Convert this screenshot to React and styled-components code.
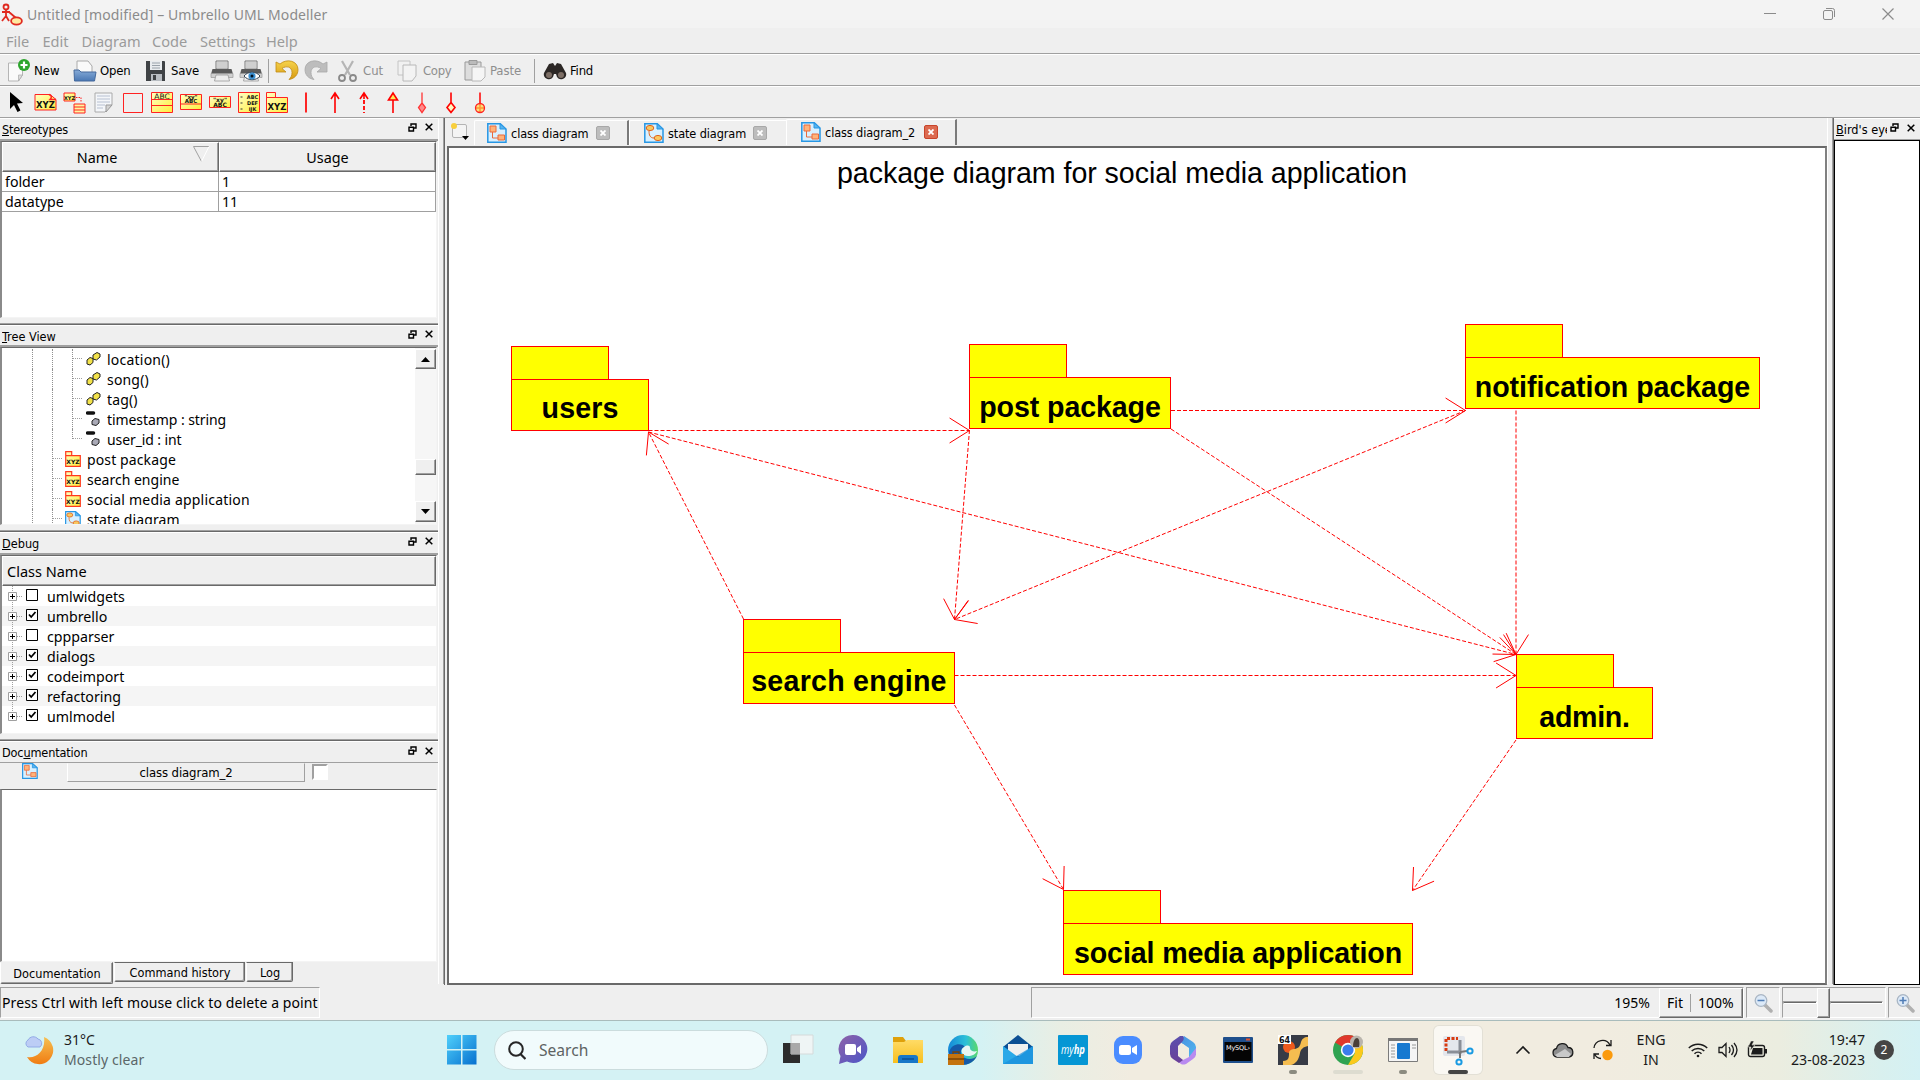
import React from "react";
import styled, { createGlobalStyle, css } from "styled-components";

const tahoma = `"DejaVu Sans Condensed", "DejaVu Sans", sans-serif`;
const segoe = `"Noto Sans", "Open Sans", sans-serif`;

const Global = createGlobalStyle`
  * { box-sizing: border-box; }
  html, body { margin: 0; padding: 0; background: #efefef; }
  body { font-family: ${segoe}; color: #000; overflow: hidden; }
  svg { display: block; flex: none; }
`;

const Screen = styled.div`
  width: 1920px;
  height: 1080px;
  display: flex;
  flex-direction: column;
  background: #efefef;
  overflow: hidden;
  white-space: nowrap;
`;

/* ---------- window chrome ---------- */

const TitleBar = styled.header`
  height: 28px;
  flex: none;
  display: flex;
  align-items: center;
  background: #f3f3f3;
  padding: 0 26px 0 1px;
  color: #8b8b8b;
`;
const WindowTitle = styled.span`
  flex: 1;
  margin-left: 4px;
  font-size: 14px;
  letter-spacing: 0.11px;
`;
const WindowButtons = styled.div`
  display: flex;
  gap: 47px;
`;

const MenuBar = styled.nav`
  height: 25px;
  flex: none;
  display: flex;
  align-items: center;
  padding-left: 6px;
  color: #9b9b9b;
`;
const MenuItem = styled.span`
  width: ${(p) => p.$w}px;
  font-size: 14.6px;
`;

const Toolbar = styled.div`
  height: 32px;
  flex: none;
  display: flex;
  align-items: center;
  border-top: 1px solid #a0a0a0;
  box-shadow: inset 0 1px 0 #fff;
  padding: 2px 0 0 ${(p) => p.$pad}px;
`;
const Action = styled.div`
  width: ${(p) => p.$w}px;
  height: 24px;
  display: flex;
  align-items: center;
  gap: 3px;
  font: 13px ${tahoma};
  letter-spacing: ${(p) => p.$ls || 0}px;
  color: ${(p) => (p.$off ? "#8e8e8e" : "#000")};
`;
const ToolSep = styled.div`
  width: 1px;
  height: 24px;
  background: #a0a0a0;
  margin-right: ${(p) => p.$after}px;
`;
const Tool = styled.div`
  width: 28.95px;
  height: 24px;
  flex: none;
`;

/* ---------- docks ---------- */

const Workspace = styled.main`
  height: 869px;
  flex: none;
  display: flex;
  border-top: 1px solid #a0a0a0;
`;
const LeftDock = styled.aside`
  width: 438px;
  flex: none;
  display: flex;
  flex-direction: column;
`;
const Dock = styled.section`
  height: ${(p) => p.$h}px;
  flex: none;
  display: flex;
  flex-direction: column;
  ${(p) =>
    p.$line &&
    css`
      border-bottom: 1px solid #696969;
      box-shadow: inset 0 -1px 0 #a0a0a0;
      padding-bottom: 6px;
    `}
`;
const DockTitle = styled.div`
  height: ${(p) => (p.$tall ? 23 : 22)}px;
  flex: none;
  display: flex;
  align-items: center;
  padding: 2px ${(p) => p.$right ?? 5}px ${(p) => (p.$tall ? 1 : 0)}px 2px;
  border-bottom: ${(p) => (p.$thin ? 1 : 2)}px solid #a0a0a0;
  box-shadow: inset 0 1px 0 #fff;
  font: 12.6px ${tahoma};
`;
const DockName = styled.span`
  flex: 1;
  min-width: 0;
  overflow: hidden;
  letter-spacing: ${(p) => p.$ls || 0}px;
`;
const DockIcons = styled.div`
  display: flex;
  flex: none;
  gap: 8px;
  align-items: center;
  margin: -4px 0 0 3px;
`;
const Frame = styled.div`
  flex: 1;
  min-height: 0;
  margin-right: 1px;
  background: #fff;
  border: 1px solid;
  border-color: #696969 #f4f4f4 #f4f4f4 #8a8a8a;
  border-left-width: 2px;
  overflow: hidden;
  display: flex;
`;

const Table = styled.div`
  width: 100%;
  display: grid;
  grid-template-columns: 217px 217px;
  grid-template-rows: 30px 20px 20px;
`;
const HeadCell = styled.div`
  display: flex;
  align-items: center;
  justify-content: center;
  padding-left: ${(p) => p.$pad || 0}px;
  background: #efefef;
  border: 1px solid;
  border-color: #fff #696969 #696969 #fff;
  box-shadow: inset -1px -1px 0 #a0a0a0;
  font-size: 14.4px;
`;
const SortMark = styled.svg`
  margin: -6px 0 0 76px;
`;
const Cell = styled.div`
  padding-left: 3px;
  border-right: 1px solid #a0a0a0;
  border-bottom: 1px solid #a0a0a0;
  font-size: 14.2px;
  line-height: 19px;
`;

const Tree = styled.div`
  flex: 1;
  padding-top: 1px;
  overflow: hidden;
`;
const TreeRow = styled.div`
  height: 20px;
  display: flex;
  align-items: center;
  padding-left: 30px;
  font-size: 14px;
  letter-spacing: ${(p) => p.$ls}px;
`;
const Guide = styled.i`
  width: 20px;
  height: 20px;
  flex: none;
  border-left: 1px dotted #909090;
`;
const Elbow = styled.i`
  width: 11px;
  height: ${(p) => (p.$last ? 10 : 20)}px;
  align-self: flex-start;
  flex: none;
  border-left: 1px dotted #909090;
  background: linear-gradient(90deg, #a0a0a0 50%, transparent 50%) 0 9px / 2px 1px repeat-x;
`;
const TreeIcon = styled.span`
  width: 22px;
  flex: none;
  padding-left: ${(p) => p.$pad}px;
  margin-right: 2px;
`;
const ScrollBar = styled.div`
  width: 21px;
  flex: none;
  display: flex;
  flex-direction: column;
  padding-top: 1px;
  background: #f6f6f6;
`;
const ScrollPart = styled.div`
  height: ${(p) => p.$h}px;
  flex: none;
  margin-top: ${(p) => p.$gap || 0}px;
  display: flex;
  align-items: center;
  justify-content: center;
  background: #efefef;
  border: 1px solid;
  border-color: #fff #696969 #696969 #fff;
  box-shadow: inset -1px -1px 0 #a0a0a0;
`;

const DebugList = styled.div`
  flex: 1;
`;
const DebugHead = styled.div`
  height: 30px;
  padding-left: 4px;
  background: #efefef;
  border: 1px solid;
  border-color: #fff #696969 #696969 #fff;
  box-shadow: inset -1px -1px 0 #a0a0a0;
  font-size: 14.5px;
  line-height: 29px;
`;
const DebugRow = styled.div`
  height: 20px;
  display: flex;
  align-items: center;
  background: ${(p) => (p.$alt ? "#f5f5f5" : "#fff")};
  font-size: 14.2px;
`;

const DocHead = styled.div`
  height: 26px;
  flex: none;
  display: flex;
  align-items: flex-start;
  padding-left: 22px;
`;
const DocButton = styled.div`
  width: 238px;
  height: 19px;
  margin: 0 7px 0 29px;
  border: 1px solid;
  border-color: #efefef #a0a0a0 #a0a0a0 #fff;
  text-align: center;
  font: 13px/17px ${tahoma};
  letter-spacing: -0.1px;
`;
const DocCheck = styled.div`
  width: 16px;
  height: 16px;
  margin-top: 1px;
  background: #fff;
  border: 2px solid;
  border-color: #a0a0a0 #fff #fff #a0a0a0;
`;
const BottomTabs = styled.div`
  height: 24px;
  flex: none;
  display: flex;
  align-items: flex-start;
  background: #efefef;
`;
const BottomTab = styled.div`
  width: ${(p) => p.$w}px;
  height: ${(p) => (p.$on ? 22 : 20)}px;
  padding-left: 1px;
  border: 1px solid;
  border-color: ${(p) => (p.$on ? "#efefef" : "#696969")} #696969 #696969 #fff;
  box-shadow: inset -1px -1px 0 #a0a0a0;
  border-radius: 0 0 2px 2px;
  text-align: center;
  font: 12.6px/${(p) => (p.$on ? 22 : 19)}px ${tahoma};
  margin-right: 1px;
`;

/* ---------- document area ---------- */

const Split = styled.div`
  width: 6px;
  height: 866px;
  flex: none;
  border-left: 1px solid #fff;
  border-right: 1px solid #a0a0a0;
`;
const Center = styled.div`
  width: 1383px;
  height: 867px;
  flex: none;
  display: flex;
  flex-direction: column;
  border-left: 1px solid #696969;
  padding-left: 2px;
`;
const TabStrip = styled.div`
  height: 28px;
  flex: none;
  display: flex;
  align-items: flex-end;
  padding: 0 0 1px 3px;
`;
const DocTab = styled.div`
  width: ${(p) => p.$w}px;
  height: ${(p) => (p.$on ? 26 : 25)}px;
  display: flex;
  align-items: center;
  padding-left: ${(p) => p.$pad}px;
  border-top: 1px solid #fff;
  border-left: 1px solid #fff;
  border-right: ${(p) => (p.$edge ? "2px solid #7a7a7a" : "0")};
  border-radius: 2px 0 0 0;
  font: 12.6px ${tahoma};
  padding-bottom: ${(p) => (p.$on ? 1 : 0)}px;
`;
const DocTabName = styled.span`
  width: ${(p) => p.$w}px;
  margin-left: 4px;
  letter-spacing: -0.1px;
`;
const NewTab = styled.div`
  width: 24px;
  height: 24px;
`;
const CloseBox = styled.span`
  width: 14px;
  height: 14px;
  display: grid;
  place-items: center;
  border-radius: 2px;
  background: ${(p) => (p.$on ? "#dc6a50" : "#bdbdbd")};
  border: 1px solid ${(p) => (p.$on ? "#c8442a" : "#a8a8a8")};
`;
const Canvas = styled.div`
  flex: 1;
  position: relative;
  background: #fff;
  border: 2px solid;
  border-color: #696969 #808080 #696969 #696969;
  overflow: hidden;
`;
const Heading = styled.div`
  position: absolute;
  left: 388px;
  top: 9px;
  font: 28.6px "Liberation Sans", Arial, sans-serif;
  letter-spacing: -0.05px;
`;
const Links = styled.svg`
  position: absolute;
  left: 0;
  top: 0;
`;
const Node = styled.div`
  position: absolute;
  left: ${(p) => p.$x}px;
  top: ${(p) => p.$y}px;
  width: ${(p) => p.$w}px;
`;
const NodeTab = styled.div`
  width: 98px;
  height: 34px;
  background: #ff0;
  border: 1px solid #f00;
`;
const NodeBody = styled.div`
  height: 52px;
  margin-top: -1px;
  padding-top: ${(p) => p.$pad}px;
  background: #ff0;
  border: 1px solid #f00;
  text-align: center;
  font: bold 28.6px/32px "Liberation Sans", Arial, sans-serif;
  letter-spacing: ${(p) => p.$ls}px;
`;

const RightDock = styled.aside`
  flex: 1;
  min-width: 0;
  height: 867px;
  display: flex;
  flex-direction: column;
  border-left: 1px solid #696969;
`;
const BirdView = styled.div`
  flex: 1;
  background: #fff;
  border: 1px solid #000;
`;

/* ---------- status bar ---------- */

const StatusBar = styled.footer`
  height: 34px;
  flex: none;
  display: flex;
  padding: 1px 0 2px;
`;
const Sunken = styled.div`
  width: ${(p) => p.$w}px;
  flex: none;
  margin-right: ${(p) => p.$after ?? 2}px;
  display: flex;
  align-items: center;
  justify-content: ${(p) => p.$j || "center"};
  border: 1px solid;
  border-color: #a0a0a0 #fff #fff #a0a0a0;
  font-size: 14px;
  letter-spacing: ${(p) => p.$ls || 0}px;
`;
const ZoomButtons = styled.div`
  width: 84px;
  height: 30px;
  display: flex;
  align-items: center;
  padding-left: 7px;
  margin-left: 9px;
  border: 1px solid;
  border-color: #fff #696969 #696969 #fff;
  box-shadow: inset -1px -1px 0 #a0a0a0;
`;
const FitLabel = styled.span`
  width: 24px;
  height: 18px;
  line-height: 17px;
  margin-right: 7px;
  border-right: 1px solid #a0a0a0;
`;
const Track = styled.div`
  width: 100%;
  height: 30px;
  display: flex;
  align-items: center;
`;
const Groove = styled.i`
  width: ${(p) => p.$w}px;
  height: 3px;
  border: 1px solid;
  border-color: #a0a0a0 #fff #fff #a0a0a0;
  background: #696969;
`;
const Handle = styled.i`
  width: 13px;
  height: 30px;
  background: #efefef;
  border: 1px solid;
  border-color: #fff #696969 #696969 #fff;
  box-shadow: inset -1px -1px 0 #a0a0a0;
`;

/* ---------- taskbar ---------- */

const Taskbar = styled.footer`
  height: 60px;
  flex: none;
  display: flex;
  align-items: center;
  padding-bottom: 1px;
  border-top: 1px solid #a9bcbc;
  background: linear-gradient(90deg, #d4f2f4 0, #d4f2f4 980px, #e9eee4 1060px, #f1ece0 1130px, #f1ece0 1600px, #ebede0 1780px, #d9f0ee 1880px, #d4f1f4 1920px);
`;
const Weather = styled.div`
  width: 447px;
  padding-left: 23px;
  display: flex;
  align-items: center;
  gap: 7px;
`;
const WeatherText = styled.div`
  font-size: 14px;
  line-height: 20px;
  color: #1c1c1c;
  span { display: block; color: #5b6768; letter-spacing: 0.1px; }
`;
const SearchPill = styled.div`
  width: 274px;
  height: 40px;
  margin: 0 6px 0 17px;
  display: flex;
  align-items: center;
  gap: 13px;
  padding-left: 13px;
  border: 1px solid #cbdcdd;
  border-radius: 20px;
  background: #f1fbfc;
  color: #5d6363;
  font-size: 15.6px;
`;
const Apps = styled.div`
  display: flex;
  gap: 7px;
`;
const AppButton = styled.div`
  width: 48px;
  height: 48px;
  display: flex;
  flex-direction: column;
  align-items: center;
  padding-top: 8px;
  border-radius: 5px;
  ${(p) =>
    p.$on &&
    css`
      background: #faf8f3;
      box-shadow: 0 0 0 1px #e3e0d6;
    `}
`;
const Run = styled.i`
  width: ${(p) => p.$w}px;
  height: 4px;
  margin-top: 4px;
  border-radius: 2px;
  background: ${(p) => p.$c};
`;
const Tray = styled.div`
  flex: 1;
  display: flex;
  align-items: center;
  padding-left: 33px;
`;
const TrayText = styled.div`
  width: ${(p) => p.$w}px;
  margin-right: ${(p) => p.$after}px;
  text-align: ${(p) => p.$a};
  font-size: 14.2px;
  line-height: 20px;
  color: #1b1b1b;
`;
const Badge = styled.div`
  width: 20px;
  height: 20px;
  border-radius: 50%;
  background: #454545;
  color: #fff;
  text-align: center;
  font-size: 12px;
  line-height: 19px;
`;
const Gap = styled.i`
  width: ${(p) => p.$w}px;
`;

/* ---------- icons ---------- */

const Ico = ({ w = 24, h = 24, children, ...r }) => (
  <svg width={w} height={h} viewBox={`0 0 ${w} ${h}`} fill="none" {...r}>
    {children}
  </svg>
);
const iconText = { fontFamily: "DejaVu Sans", fontWeight: "bold", fill: "#111", textAnchor: "middle" };

const DefsSvg = styled.svg`
  position: absolute;
`;
const Defs = () => (
  <DefsSvg width="0" height="0">
    <defs>
      <linearGradient id="yel" x1="0" y1="0" x2="1" y2="1">
        <stop offset="0" stopColor="#ffffc4" />
        <stop offset="1" stopColor="#ffee3c" />
      </linearGradient>
      <linearGradient id="gold" x1="0" y1="0" x2="0" y2="1">
        <stop offset="0" stopColor="#f6d34c" />
        <stop offset="1" stopColor="#d79a10" />
      </linearGradient>
      <linearGradient id="blu" x1="0" y1="0" x2="0" y2="1">
        <stop offset="0" stopColor="#86abd8" />
        <stop offset="1" stopColor="#4a78b4" />
      </linearGradient>
      <linearGradient id="win" x1="0" y1="0" x2="1" y2="1">
        <stop offset="0" stopColor="#4fd0fb" />
        <stop offset="1" stopColor="#0670cf" />
      </linearGradient>
      <linearGradient id="moon" x1="0" y1="0" x2="0" y2="1">
        <stop offset="0" stopColor="#f6c052" />
        <stop offset="1" stopColor="#f07c12" />
      </linearGradient>
      <linearGradient id="chat" x1="0" y1="0" x2="1" y2="1">
        <stop offset="0" stopColor="#8f62a8" />
        <stop offset="1" stopColor="#4b55c8" />
      </linearGradient>
      <linearGradient id="edge" x1="0" y1="0" x2="1" y2="0">
        <stop offset="0" stopColor="#1588d8" />
        <stop offset=".6" stopColor="#2cc0d8" />
        <stop offset="1" stopColor="#5bd86a" />
      </linearGradient>
      <linearGradient id="fold" x1="0" y1="0" x2="0" y2="1">
        <stop offset="0" stopColor="#ffdb66" />
        <stop offset="1" stopColor="#f7bf1e" />
      </linearGradient>
      <linearGradient id="m1" x1="0" y1="0" x2="1" y2="1">
        <stop offset="0" stopColor="#4a8fe0" />
        <stop offset="1" stopColor="#4fb8f0" />
      </linearGradient>
      <linearGradient id="m2" x1="0" y1="0" x2="0" y2="1">
        <stop offset="0" stopColor="#5b4fae" />
        <stop offset="1" stopColor="#6a3f98" />
      </linearGradient>
    </defs>
  </DefsSvg>
);

const Logo = () => (
  <Ico w={22} h={26} stroke="#e02a20" strokeWidth="1.8">
    <circle cx="5" cy="6" r="2.5" />
    <path d="M5 9v6M1 11h8M5 15l-4 5M5 15l3 5M8 11l7 6" />
    <ellipse cx="15.5" cy="20" rx="5.4" ry="3.6" fill="#ffe9a0" />
  </Ico>
);
const Printer = () => (
  <>
    <path d="M6 2h12v8H6z" fill="#f4f4f4" stroke="#777" />
    <path d="M7 4h10M7 6h10M7 8h10" stroke="#aaa" />
    <path d="M2.500 10h19l1.500 5H1z" fill="#5a5a5a" />
    <path d="M1 14.500h22v4H1z" fill="#d0d0d0" stroke="#999" strokeWidth=".7" />
    <path d="M6 16h12l1.500 6h-15z" fill="#eee" stroke="#999" strokeWidth=".8" />
  </>
);
const DiagramIcon = ({ state, s = 20 }) => (
  <svg width={s} height={s} viewBox="0 0 20 20" fill="none">
    <path d="M.8.8h12.500L19 6v13.200H.8z" fill="#d8f0ff" stroke="#2796e4" strokeWidth="1.500" />
    <path d="M13 .8V6h6z" fill="#59b4ee" stroke="#2796e4" />
    {state ? (
      <>
        <ellipse cx="6" cy="5" rx="3.800" ry="2.600" fill="#f9c860" stroke="#e0641e" />
        <ellipse cx="14" cy="15" rx="3.800" ry="2.600" fill="#f9c860" stroke="#e0641e" />
        <path d="M5 8c0 4 1 7 5 7" stroke="#e0641e" />
      </>
    ) : (
      <>
        <path d="M3 3h6v6H3zM11 12h6.500v5H11z" fill="#ffb37a" stroke="#ea6a3c" />
        <path d="M5.500 9v6H11" stroke="#ea6a3c" />
      </>
    )}
  </svg>
);
const PackageIcon = () => (
  <Ico w={16} h={16}>
    <path d="M.7.7h6v4h-6zM.7 4.700h14.600v10.600H.7z" fill="url(#yel)" stroke="#ff3a1e" strokeWidth="1.200" />
    <text x="8" y="13" fontSize="6" {...iconText}>XYZ</text>
  </Ico>
);
const OperationIcon = () => (
  <Ico w={15} h={14} stroke="#222">
    <path d="M1 8l3-2.500 3 1v4L4 13l-3-1zM7 3l4-2.500 3 1.500v3L10.500 8 7 7z" fill="#f2e24a" />
  </Ico>
);
const AttributeIcon = () => (
  <Ico w={15} h={16}>
    <path d="M1.500 2h6" stroke="#111" strokeWidth="3.500" strokeLinecap="round" />
    <path d="M6 10l3-2.500 4 1v3.500l-3 2.500-4-1z" fill="#a9a9b6" stroke="#222" />
  </Ico>
);
const FloatIcon = () => (
  <Ico w={9} h={9}>
    <path d="M3 3V1h5v4H6" stroke="#000" strokeWidth="1.400" />
    <path d="M1 4.300h4.500V8H1z" stroke="#000" strokeWidth="1.400" />
  </Ico>
);
const CloseIcon = () => (
  <Ico w={8} h={8}>
    <path d="M.7.7l6.600 6.600M7.300.7L.7 7.300" stroke="#000" strokeWidth="1.500" />
  </Ico>
);
const CheckIcon = ({ on }) => (
  <Ico w={12} h={14}>
    <path d="M.5.5h11v11H.5z" fill="#fff" stroke="#000" />
    {on && <path d="M3 5.500l2.200 2.500L9.500 3" stroke="#000" strokeWidth="1.800" />}
  </Ico>
);
const Magnifier = ({ plus }) => (
  <Ico w={20} h={20}>
    <path d="M12 12l6 6" stroke="#b0b0b0" strokeWidth="3.500" strokeLinecap="round" />
    <circle cx="8" cy="7.500" r="5.800" fill="#dce9f7" stroke="#a9b6c4" strokeWidth="1.300" />
    <path d={plus ? "M4.500 7.500h7M8 4v7" : "M4.500 7.500h7"} stroke="#4f7cb5" strokeWidth="1.500" />
  </Ico>
);
const TabCross = () => (
  <Ico w={6} h={6}>
    <path d="M.5.5l5 5M5.500.5l-5 5" stroke="#fff" strokeWidth="1.800" />
  </Ico>
);

const titled = (name, i) => (
  <>
    {name.slice(0, i)}
    <u>{name[i]}</u>
    {name.slice(i + 1)}
  </>
);

const Title = ({ name, u = 0, ls, right, thin, tall }) => (
  <DockTitle $right={right} $thin={thin} $tall={tall}>
    <DockName $ls={ls}>{titled(name, u)}</DockName>
    <DockIcons>
      <FloatIcon />
      <CloseIcon />
    </DockIcons>
  </DockTitle>
);

const tools = [
  <path d="M5 1l13 11-6 .5 3.500 7-3 1.500-3.500-7-4 4z" fill="#000" />,
  <>
    <path d="M1 3.500h15l6 5v10.500H1z" fill="url(#yel)" stroke="#f22" />
    <path d="M15 3.500c3 1 3 3 1 5h6" stroke="#f22" strokeWidth="1.500" />
    <text x="11.500" y="17" fontSize="8.500" {...iconText}>XYZ</text>
  </>,
  <>
    <path d="M1 2h11v8H1z" fill="url(#yel)" stroke="#f22" />
    <path d="M13 6.500h5v5" stroke="#f22" strokeDasharray="1.500 1" />
    <text x="6.500" y="8.500" fontSize="5" {...iconText}>XYZ</text>
    <path d="M11 13h11v9H11zM11 16h11M11 19h11" fill="#fff6a0" stroke="#f22" />
  </>,
  <>
    <path d="M3 2h17v12l-7 7H3z" fill="#f4f6f9" stroke="#aaa" />
    <path d="M5 5h13M5 8h13M5 11h13M5 14h8M5 17h6" stroke="#a8b4c8" strokeWidth=".8" />
    <path d="M20 14h-6v7z" fill="#d4d4d4" stroke="#999" />
  </>,
  <path d="M2.500 2.500h19v19h-19z" stroke="#f22" />,
  <>
    <path d="M1.500 1.500h21v20h-21zM1.500 8.500h21M1.500 14.500h21" fill="url(#yel)" stroke="#f22" />
    <text x="12" y="7.500" fontSize="7.500" {...iconText} fontWeight="normal">ABC</text>
  </>,
  <>
    <path d="M1.500 3.500h21v15h-21zM1.500 13h21" fill="url(#yel)" stroke="#f22" />
    <text x="12" y="7.500" fontSize="5.500" {...iconText}>"xy"</text>
    <text x="12" y="12" fontSize="5.500" {...iconText}>ABC</text>
  </>,
  <>
    <path d="M1.500 5.500h21v11h-21z" fill="url(#yel)" stroke="#f22" />
    <text x="12" y="10.500" fontSize="6" {...iconText}>"xy"</text>
    <text x="12" y="15.500" fontSize="6" {...iconText}>ABC</text>
  </>,
  <>
    <path d="M1.500 1.500h21v20h-21z" fill="url(#yel)" stroke="#f22" />
    <path d="M3.500 6h2M3.500 12h2M3.500 18h2" stroke="#333" />
    <text x="15.500" y="7.500" fontSize="5" {...iconText}>ABC</text>
    <text x="15.500" y="13.800" fontSize="5" {...iconText}>DEF</text>
    <text x="15.500" y="20" fontSize="5" {...iconText}>IJK</text>
  </>,
  <>
    <path d="M1.500 1.500h9v5h-9zM1.500 6.500h21v15h-21z" fill="url(#yel)" stroke="#f22" />
    <text x="12" y="18.500" fontSize="8.500" {...iconText}>XYZ</text>
  </>,
  <path d="M12 1.500v20" stroke="#f00" strokeWidth="1.700" />,
  <path d="M12 2v20M8 8l4-6 4 6" stroke="#f00" strokeWidth="1.600" />,
  <>
    <path d="M12 9v13" stroke="#f00" strokeWidth="1.800" strokeDasharray="4 2" />
    <path d="M12 2v6M8 8l4-6 4 6" stroke="#f00" strokeWidth="1.600" />
  </>,
  <path d="M12 9v13M7.500 9l4.500-7 4.500 7z" fill="#ffe95a" stroke="#f00" strokeWidth="1.600" />,
  <path d="M12 1.500V12l-3.500 4.500L12 21.500l3.500-5L12 12" fill="#ff8a8a" stroke="#f33" strokeWidth="1.300" />,
  <path d="M12 1.500V11.500l-4 5 4 5 4-5-4-5" fill="#fff6c0" stroke="#f00" strokeWidth="1.600" />,
  <>
    <path d="M12 1.500v20M7 17h10" stroke="#f00" strokeWidth="1.500" />
    <circle cx="12" cy="17" r="4.500" fill="#ffd84a" fillOpacity=".7" stroke="#f22" strokeWidth="1.300" />
  </>,
];

const treeRows = [
  ["op", "location()", 0.22],
  ["op", "song()", 0.18],
  ["op", "tag()", 0.15],
  ["at", "timestamp : string", -0.07],
  ["at", "user_id : int", -0.1, true],
  ["pk", "post package", 0.12],
  ["pk", "search engine", 0],
  ["pk", "social media application", 0.2],
  ["sd", "state diagram", 0.1],
];

const debugRows = [
  ["umlwidgets", false],
  ["umbrello", true],
  ["cppparser", false],
  ["dialogs", true],
  ["codeimport", true],
  ["refactoring", true],
  ["umlmodel", true],
];

/* name, x, y, width, label offset, label tracking */
const nodes = [
  ["users", 62, 198, 138, 12, 0.1],
  ["post package", 520, 196, 202, 13, -0.1],
  ["search engine", 294, 471, 212, 12, 0.25],
  ["notification package", 1016, 176, 295, 13, -0.05],
  ["admin.", 1067, 506, 137, 13, -0.3],
  ["social media application", 614, 742, 350, 13, -0.1],
];

const links = [
  [199.5, 282.5, 520.5, 282.5],
  [294.5, 471, 199.5, 284],
  [199.5, 284, 1067, 506.5],
  [520.5, 282, 505.5, 471.5],
  [1016.5, 262.5, 505.5, 471.5],
  [722, 262.5, 1016.5, 262.5],
  [722, 281, 1067, 506.5],
  [1067, 262.5, 1067, 506.5],
  [505.5, 527.5, 1067, 527.5],
  [505.5, 557, 614.5, 741.5],
  [1067, 592, 963.5, 742.5],
];

const headPath = ([x1, y1, x2, y2]) => {
  const a = Math.atan2(y1 - y2, x1 - x2);
  const tip = (d) => `${x2 + 23.5 * Math.cos(a + d)} ${y2 + 23.5 * Math.sin(a + d)}`;
  return `M${tip(0.56)}L${x2} ${y2}L${tip(-0.56)}`;
};

const apps = [
  [<>
    <path d="M1 9h17v20H1z" fill="#2c2c2c" />
    <path d="M9 1h22v19H9z" fill="#f2f5f5" fillOpacity=".88" stroke="#d5dada" />
    <path d="M9 9h9v11H9z" fill="#a9a9a9" />
  </>],
  [<>
    <path d="M16 1a14 14 0 1 1-6 26.500L2 30l1.500-8A14 14 0 0 1 16 1z" fill="url(#chat)" />
    <rect x="8" y="10" width="11" height="11" rx="2" fill="#fff" />
    <path d="M20 14l4-3v9l-4-3z" fill="#fff" />
  </>],
  [<>
    <path d="M1 3h10l3 4v5H1z" fill="#dfa10b" />
    <path d="M1 8h11l3-2h16v23H1z" fill="url(#fold)" />
    <path d="M6 29v-5q0-3 3-3h14q3 0 3 3v5z" fill="#1877c8" />
    <path d="M10 25h12" stroke="#0b4f94" strokeWidth="1.500" />
  </>],
  [<>
    <circle cx="16" cy="16" r="15" fill="url(#edge)" />
    <path d="M2 18c3-10 14-9 16-5-5 1-6 9 0 11 4 2 9 1 12-2-3 6-9 9-15 9C8 31 2 26 2 18z" fill="#155aa8" />
    <path d="M17 13c-5 3-2 9 4 9 4 0 8-2 9-5-3 1-7 0-7-3s-3-3-6-1z" fill="#e6f6f4" />
    <path d="M1 20h16v11H1z" fill="#c4730e" />
    <path d="M6 20v-2h6v2M1 25h16" stroke="#7b4404" strokeWidth="1.300" />
  </>],
  [<>
    <path d="M16 1l15 12v17H1V13z" fill="#0c4f94" />
    <path d="M6 10h20v12H6z" fill="#f0f0f0" />
    <path d="M1 12l15 11 15-11v18H1z" fill="#2aa9e8" />
    <path d="M1 30l30-18v18z" fill="#1a8fdb" fillOpacity=".7" />
  </>],
  [<>
    <rect x="1" y="1" width="30" height="30" rx="1" fill="#0596d4" />
    <text x="16" y="20" fontSize="12" fontStyle="italic" fontFamily="Open Sans" fill="#fff" textAnchor="middle" textLength="24" lengthAdjust="spacingAndGlyphs">my<tspan fontWeight="bold">hp</tspan></text>
  </>],
  [<>
    <rect x="2" y="2" width="28" height="28" rx="9" fill="#4a8cff" />
    <rect x="7" y="11" width="12" height="10" rx="2.500" fill="#fff" />
    <path d="M20 14l5-3v10l-5-3z" fill="#fff" />
  </>],
  [<>
    <path d="M17 2l9 6q3 2 3 5v8l-7 3v-9l-6-5-4-3z" fill="url(#m1)" />
    <path d="M29 14v6q0 3-3 5l-7 5q-3 1-5 0l-6-5 8 1 6-3z" fill="#b98af0" />
    <path d="M16 2q2 3-1 6l-4 4v10l5 4-4 3-6-4q-3-2-3-5v-8q0-3 3-5l7-5z" fill="url(#m2)" />
    <path d="M16 10l6 4v6l-6 4-5-4v-6z" fill="#f1ece0" />
  </>],
  [<>
    <rect x="1" y="3" width="30" height="26" rx="1" fill="#1f4f8c" />
    <path d="M2.500 8h27v19h-27z" fill="#050505" />
    <path d="M24 4.500h4v2h-4z" fill="#e0522e" />
    <text x="16" y="16" fontSize="6.500" fontFamily="DejaVu Sans" fill="#fff" textAnchor="middle" textLength="24">MySQL›</text>
  </>],
  [<>
    <rect x="1" y="1" width="30" height="30" fill="#373b46" />
    <circle cx="12" cy="13" r="6" fill="#ee5a1c" />
    <path d="M31 3v9c-5 1-7 3-8 7-1 6-4 11-9 12H6v-4c6 0 6-4 6-8 0-3 3-4 6-4 4-1 5-3 6-7 1-3 3-5 7-5z" fill="#f5bd50" />
    <rect x="1" y="1" width="13" height="9" fill="#fff" />
    <text x="7.500" y="8.800" fontSize="8" {...iconText}>64</text>
  </>, 8, "#8b8b80"],
  [<>
    <circle cx="16" cy="16" r="15" fill="#2fa351" />
    <path d="M16 16L3 8.500A15 15 0 0 1 29 8.500L29.500 10H16z" fill="#e0382c" />
    <path d="M16 31a15 15 0 0 0 13.800-21H18l5 9z" fill="#fbc91b" />
    <circle cx="16" cy="16" r="7.200" fill="#fff" />
    <circle cx="16" cy="16" r="5.600" fill="#3b7ded" />
    <circle cx="24.500" cy="8" r="6.500" fill="#b9b4ac" />
    <path d="M21 13c0-6 2-9 4-9s3 4 2 9z" fill="#4a4038" />
  </>, 30, "#dddcd0"],
  [<>
    <path d="M1.500 4.500h29v23h-29z" fill="#f5f5f5" stroke="#7b7b7b" />
    <path d="M1 4h30v3H1z" fill="#777" />
    <path d="M4 11h4M4 14h4M4 17h4M4 20h4M4 23h4M25 11h4M25 14h4" stroke="#999" />
    <rect x="10" y="9" width="13" height="16" rx="1" fill="#1779d0" />
  </>, 8, "#8b8b80"],
  [<>
    <rect x="1" y="2" width="22" height="20" rx="2" fill="#e4e7ec" />
    <path d="M4 17V4.500h12" stroke="#d83b10" strokeWidth="3" strokeDasharray="3 1.500" />
    <path d="M5 18h14M18 6v14" stroke="#8a8f97" strokeWidth="3" />
    <path d="M18 18l7-1M18 18v6" stroke="#777" strokeWidth="2" />
    <circle cx="28" cy="17" r="2.600" stroke="#1b9be2" strokeWidth="2" />
    <circle cx="17" cy="28" r="2.600" stroke="#1b9be2" strokeWidth="2" />
  </>, 20, "#454545", true],
];

export default function App() {
  return (
    <Screen>
      <Global />
      <Defs />
      <TitleBar>
        <Logo />
        <WindowTitle>Untitled [modified] – Umbrello UML Modeller</WindowTitle>
        <WindowButtons>
          <Ico w={12} h={12}><path d="M0 5.500h12" stroke="#8b8b8b" /></Ico>
          <Ico w={12} h={12} stroke="#8b8b8b"><rect x=".5" y="2.500" width="9" height="9" rx="1.500" /><path d="M3 .5h6.500q2 0 2 2V9" /></Ico>
          <Ico w={12} h={12}><path d="M.5.5l11 11M11.500.5l-11 11" stroke="#8b8b8b" strokeWidth="1.200" /></Ico>
        </WindowButtons>
      </TitleBar>
      <MenuBar>
        <MenuItem $w={36.5}>File</MenuItem>
        <MenuItem $w={39}>Edit</MenuItem>
        <MenuItem $w={70.5}>Diagram</MenuItem>
        <MenuItem $w={48}>Code</MenuItem>
        <MenuItem $w={66}>Settings</MenuItem>
        <MenuItem $w={40}>Help</MenuItem>
      </MenuBar>

      <Toolbar $pad={7}>
        <Action $w={66}>
          <Ico><path d="M1.500 4h14v12l-4 6h-10z" fill="#fafafa" stroke="#b5b5b5" /><path d="M15.500 16h-4v6z" fill="#ddd" stroke="#aaa" strokeWidth=".7" /><circle cx="17" cy="6" r="6" fill="#2da52d" /><path d="M17 2.500v7M13.500 6h7" stroke="#fff" strokeWidth="2.200" /></Ico>
          New
        </Action>
        <Action $w={71} $ls={-0.2}>
          <Ico><path d="M4 2h11l4 5v8H4z" fill="#fafafa" stroke="#aaa" /><path d="M1 11h5l2 2h15l-1.500 9h-20z" fill="url(#blu)" stroke="#44699c" /></Ico>
          Open
        </Action>
        <Action $w={66} $ls={-0.2}>
          <Ico><path d="M2 2h18q1 0 1 1v19H2z" fill="#3f4245" /><path d="M6 2h12v9H6z" fill="#e9ecef" /><path d="M8 4h8M8 6.500h8M8 9h8" stroke="#9aa2aa" /><path d="M7 15h11v7H7z" fill="#b9bdc2" /><path d="M9 16h3v5H9z" fill="#3f4245" /></Ico>
          Save
        </Action>
        <Action $w={29}><Ico><Printer /></Ico></Action>
        <Action $w={29}>
          <Ico><Printer /><path d="M5 17c4-5 12-5 16 0-4 5-12 5-16 0z" fill="#fff" stroke="#345" /><circle cx="13" cy="17" r="3.600" fill="#3a8fd0" /><circle cx="13" cy="17" r="1.500" fill="#012" /></Ico>
        </Action>
        <ToolSep $after={6} />
        <Action $w={29}><Ico><path d="M1 3v10h10l-4-3.500c4-3 10-2 10 4 0 3-1 5-3 7 6-1 9-5 9-10C23 2 12-1 5 5z" fill="url(#gold)" stroke="#c08a14" strokeWidth=".8" /></Ico></Action>
        <Action $w={32}><Ico><path d="M23 3v10H13l4-3.500c-4-3-10-2-10 4 0 3 1 5 3 7-6-1-9-5-9-10C1 2 12-1 19 5z" fill="#bdbdbd" stroke="#a8a8a8" strokeWidth=".8" /></Ico></Action>
        <Action $w={60} $off>
          <Ico><path d="M6 2l8 14M17 2L9 16" stroke="#b5b5b5" strokeWidth="2.200" /><circle cx="6" cy="19" r="3" stroke="#8a8a8a" strokeWidth="1.800" /><circle cx="17" cy="19" r="3" stroke="#8a8a8a" strokeWidth="1.800" /></Ico>
          Cut
        </Action>
        <Action $w={67} $off $ls={-0.3}>
          <Ico><path d="M2 2h12v14H2z" fill="#f1f1f1" stroke="#c4c4c4" /><path d="M7 6h13v11l-4 5H7z" fill="#f3f3f3" stroke="#b8b8b8" /></Ico>
          Copy
        </Action>
        <Action $w={71} $off $ls={-0.1}>
          <Ico><path d="M2 3h16v18H2z" fill="#ddd" stroke="#999" /><path d="M6 1.500h8v4H6z" fill="#bbb" stroke="#999" /><path d="M9 8h13v10l-4 4H9z" fill="#f5f5f5" stroke="#b8b8b8" /></Ico>
          Paste
        </Action>
        <ToolSep $after={8} />
        <Action $w={60} $ls={-0.2}>
          <Ico><path d="M6 5l4-1 2 3 2-3 4 1 5 9a5 5 0 0 1-9 4l-1-3h-2l-1 3a5 5 0 0 1-9-4z" fill="#2c2826" /><circle cx="6" cy="16" r="3" fill="#7d6f66" /><circle cx="18" cy="16" r="3" fill="#7d6f66" /></Ico>
          Find
        </Action>
      </Toolbar>
      <Toolbar $pad={5}>
        {tools.map((t, i) => (
          <Tool key={i}><Ico>{t}</Ico></Tool>
        ))}
      </Toolbar>

      <Workspace>
        <LeftDock>
          <Dock $h={207} $line>
            <Title name="Stereotypes" ls={-0.2} tall />
            <Frame>
              <Table>
                <HeadCell $pad={66}>Name<SortMark width="17" height="17" viewBox="0 0 17 17" fill="none"><path d="M16 .5H.5l8 15" stroke="#a0a0a0" /><path d="M16 .5l-7.500 15" stroke="#fff" /></SortMark></HeadCell>
                <HeadCell>Usage</HeadCell>
                <Cell>folder</Cell>
                <Cell>1</Cell>
                <Cell>datatype</Cell>
                <Cell>11</Cell>
              </Table>
            </Frame>
          </Dock>
          <Dock $h={207} $line>
            <Title name="Tree View" />
            <Frame>
              <Tree>
                {treeRows.map(([kind, text, ls, last]) => (
                  <TreeRow key={text} $ls={ls}>
                    <Guide />
                    {kind === "op" || kind === "at" ? (
                      <>
                        <Guide />
                        <Elbow $last={last} />
                        <TreeIcon $pad={3}>{kind === "op" ? <OperationIcon /> : <AttributeIcon />}</TreeIcon>
                      </>
                    ) : (
                      <>
                        <Elbow />
                        <TreeIcon $pad={2}>{kind === "pk" ? <PackageIcon /> : <DiagramIcon state s={16} />}</TreeIcon>
                      </>
                    )}
                    {text}
                  </TreeRow>
                ))}
              </Tree>
              <ScrollBar>
                <ScrollPart $h={20}><Ico w={9} h={5}><path d="M0 5l4.500-5L9 5z" fill="#000" /></Ico></ScrollPart>
                <ScrollPart $h={16} $gap={90} />
                <ScrollPart $h={21} $gap={26}><Ico w={9} h={5}><path d="M0 0l4.500 5L9 0z" fill="#000" /></Ico></ScrollPart>
              </ScrollBar>
            </Frame>
          </Dock>
          <Dock $h={209} $line>
            <Title name="Debug" tall />
            <Frame>
              <DebugList>
                <DebugHead>Class Name</DebugHead>
                {debugRows.map(([name, on], i) => (
                  <DebugRow key={name} $alt={i % 2 === 1}>
                    <Ico w={24} h={20}>
                      <path d={i === 6 ? "M10.500 0v6" : "M10.500 0v20"} stroke="#a0a0a0" strokeDasharray="1 1" />
                      <path d="M15 10.500h6" stroke="#a0a0a0" strokeDasharray="1 1" />
                      <path d="M6.500 6.500h8v8h-8z" fill="#fff" stroke="#a0a0a0" />
                      <path d="M8 10.500h5M10.500 8v5" stroke="#000" />
                    </Ico>
                    <CheckIcon on={on} />
                    <Gap $w={9} />
                    {name}
                  </DebugRow>
                ))}
              </DebugList>
            </Frame>
          </Dock>
          <Dock $h={245}>
            <Title name="Documentation" u={3} ls={-0.15} thin />
            <DocHead>
              <DiagramIcon s={16} />
              <DocButton>class diagram_2</DocButton>
              <DocCheck />
            </DocHead>
            <Frame />
            <BottomTabs>
              <BottomTab $on $w={113}>Documentation</BottomTab>
              <BottomTab $w={131}>Command history</BottomTab>
              <BottomTab $w={47}>Log</BottomTab>
            </BottomTabs>
          </Dock>
        </LeftDock>

        <Split />
        <Center>
          <TabStrip>
            <NewTab>
              <Ico w={22} h={22}><rect x="2.500" y="3.500" width="14" height="13" rx="1.500" fill="#f4f4f4" stroke="#b4b4b4" /><circle cx="4" cy="5" r="3" fill="#f8cf3c" /><path d="M12 15h7l-3.500 4z" fill="#000" /></Ico>
            </NewTab>
            <DocTab $w={155} $edge $pad={12}>
              <DiagramIcon />
              <DocTabName $w={85}>class diagram</DocTabName>
              <CloseBox><TabCross /></CloseBox>
            </DocTab>
            <DocTab $w={157} $pad={14}>
              <DiagramIcon state />
              <DocTabName $w={85}>state diagram</DocTabName>
              <CloseBox><TabCross /></CloseBox>
            </DocTab>
            <DocTab $w={171} $on $edge $pad={14}>
              <DiagramIcon />
              <DocTabName $w={99}>class diagram_2</DocTabName>
              <CloseBox $on><TabCross /></CloseBox>
            </DocTab>
          </TabStrip>
          <Canvas>
            <Heading>package diagram for social media application</Heading>
            {nodes.map(([name, x, y, w, pad, ls]) => (
              <Node key={name} $x={x} $y={y} $w={w}>
                <NodeTab />
                <NodeBody $pad={pad} $ls={ls}>{name}</NodeBody>
              </Node>
            ))}
            <Links width="1376" height="835" viewBox="0 0 1376 835" fill="none" stroke="#f00" strokeWidth="1">
              {links.map((l, i) => (
                <g key={i}>
                  <path d={`M${l[0]} ${l[1]}L${l[2]} ${l[3]}`} strokeDasharray="4 2" />
                  <path d={headPath(l)} />
                </g>
              ))}
            </Links>
          </Canvas>
        </Center>
        <Split />
        <RightDock>
          <Title name="Bird's eye view" right={5} thin />
          <BirdView />
        </RightDock>
      </Workspace>

      <StatusBar>
        <Sunken $w={320} $after={711} $j="flex-start" $ls={0.1}><Gap $w={1} />Press Ctrl with left mouse click to delete a point</Sunken>
        <Sunken $w={713} $j="flex-end">
          195%
          <ZoomButtons>
            <FitLabel>Fit</FitLabel>
            100%
          </ZoomButtons>
        </Sunken>
        <Sunken $w={34}><Magnifier /></Sunken>
        <Sunken $w={104}>
          <Track><Groove $w={34} /><Handle /><Groove $w={53} /></Track>
        </Sunken>
        <Sunken $w={34}><Magnifier plus /></Sunken>
      </StatusBar>

      <Taskbar>
        <Weather>
          <Ico w={34} h={32}>
            <path d="M21 3a14 14 0 1 1-17 20c9 2 19-6 17-20z" fill="url(#moon)" />
            <path d="M5 13a4 4 0 0 1 0-7 6 6 0 0 1 10-1 4.500 4.500 0 0 1 2 8z" fill="#bccdf5" stroke="#93abe6" />
          </Ico>
          <WeatherText>31°C<span>Mostly clear</span></WeatherText>
        </Weather>
        <Ico w={30} h={30}><path d="M0 0h14v14H0zM15.500 0h14v14h-14zM0 15.500h14v14H0zM15.500 15.500h14v14h-14z" fill="url(#win)" /></Ico>
        <SearchPill>
          <Ico w={18} h={19}><circle cx="8" cy="8" r="6.800" stroke="#262626" strokeWidth="2" /><path d="M12.500 13l5 5" stroke="#262626" strokeWidth="2.200" /></Ico>
          Search
        </SearchPill>
        <Apps>
          {apps.map(([icon, run, c, on], i) => (
            <AppButton key={i} $on={on}>
              <Ico w={32} h={32}>{icon}</Ico>
              {run && <Run $w={run} $c={c} />}
            </AppButton>
          ))}
        </Apps>
        <Tray>
          <Ico w={16} h={10}><path d="M1.500 8.500L8 2l6.500 6.500" stroke="#1b1b1b" strokeWidth="1.600" /></Ico>
          <Gap $w={21} />
          <Ico w={22} h={16}><path d="M5 15a4.300 4.300 0 0 1-.5-8.500A6 6 0 0 1 16 5.500 4.800 4.800 0 0 1 17 15z" fill="#8d8d8d" stroke="#1b1b1b" strokeWidth="1.300" /><path d="M3 13l10-6 6 5-2 3H5z" fill="#c9c9c9" /></Ico>
          <Gap $w={18} />
          <Ico w={22} h={22}><path d="M2 9a8.500 8.500 0 0 1 16-3M19 1v5.500h-5M9 19.500A8 8 0 0 1 2.500 15M2 20v-5h5" stroke="#1b1b1b" strokeWidth="1.300" /><circle cx="15.500" cy="16" r="5.200" fill="#fb9a0c" /></Ico>
          <Gap $w={17} />
          <TrayText $w={40} $a="center" $after={17}>ENG<br />IN</TrayText>
          <Ico w={20} h={16} stroke="#1b1b1b" strokeWidth="1.500"><path d="M.8 6a13 13 0 0 1 18.400 0M3.700 9a9 9 0 0 1 12.600 0M6.500 11.700a5 5 0 0 1 7 0" /><circle cx="10" cy="14" r="1.300" fill="#1b1b1b" stroke="none" /></Ico>
          <Gap $w={10} />
          <Ico w={20} h={18} stroke="#1b1b1b" strokeWidth="1.300"><path d="M1 6.500h3l4-4v13l-4-4H1zM11 6q2 3 0 6M13.500 4q4 5 0 10M16 2q6 7 0 14" /></Ico>
          <Gap $w={9} />
          <Ico w={22} h={18}><rect x="1.500" y="4.500" width="16" height="11" rx="2" stroke="#1b1b1b" strokeWidth="1.400" /><path d="M6 7h9.500v6.500H4z" fill="#1b1b1b" /><path d="M19 8v4.500" stroke="#1b1b1b" strokeWidth="2" /><path d="M4 0L1 6h3l-1 4 5-6H5l2-4z" fill="#1b1b1b" stroke="#eeeee2" strokeWidth=".5" /></Ico>
          <Gap $w={13} />
          <TrayText $w={83} $a="right" $after={9}>19:47<br />23-08-2023</TrayText>
          <Badge>2</Badge>
        </Tray>
      </Taskbar>
    </Screen>
  );
}
